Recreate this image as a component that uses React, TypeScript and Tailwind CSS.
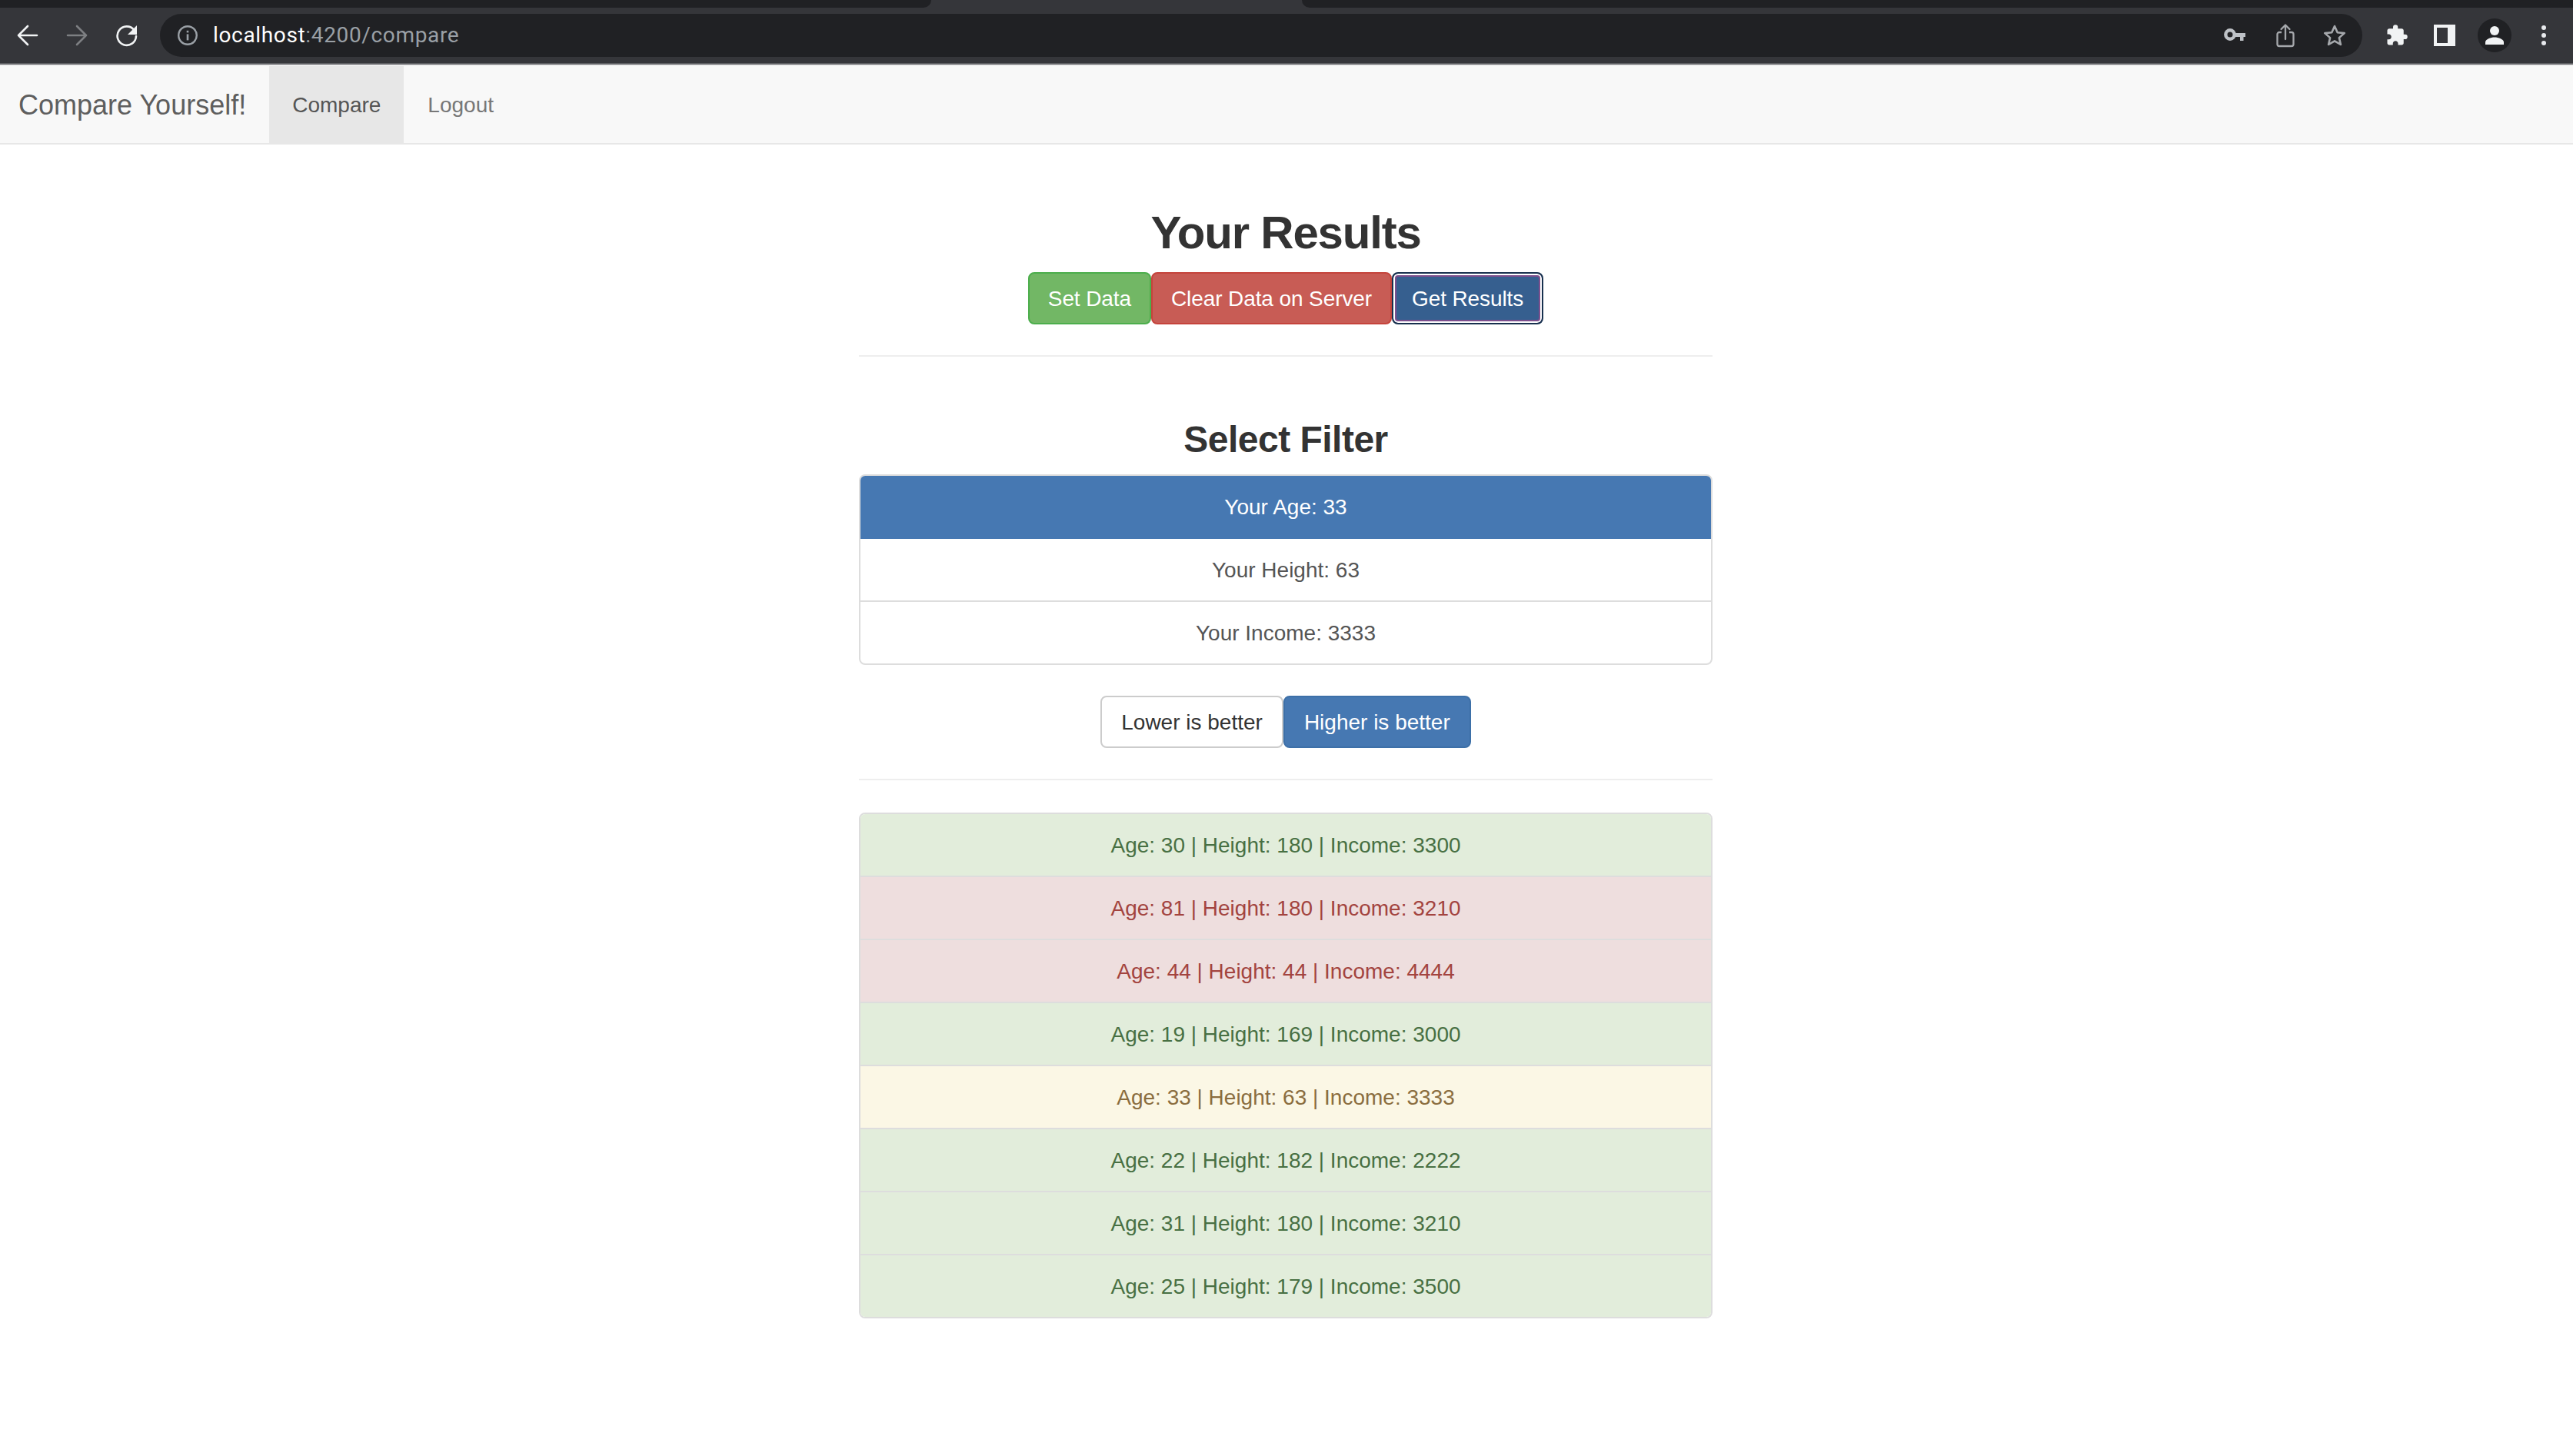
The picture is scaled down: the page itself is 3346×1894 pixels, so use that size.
import React from "react";

const filters = [
  { label: "Your Age: 33", active: true },
  { label: "Your Height: 63", active: false },
  { label: "Your Income: 3333", active: false },
];

const results = [
  { text: "Age: 30 | Height: 180 | Income: 3300", cls: "bg-[#e2eddb] text-[#487043]" },
  { text: "Age: 81 | Height: 180 | Income: 3210", cls: "bg-[#eedede] text-[#a3443f]" },
  { text: "Age: 44 | Height: 44 | Income: 4444", cls: "bg-[#eedede] text-[#a3443f]" },
  { text: "Age: 19 | Height: 169 | Income: 3000", cls: "bg-[#e2eddb] text-[#487043]" },
  { text: "Age: 33 | Height: 63 | Income: 3333", cls: "bg-[#fbf7e5] text-[#8a6d3f]" },
  { text: "Age: 22 | Height: 182 | Income: 2222", cls: "bg-[#e2eddb] text-[#487043]" },
  { text: "Age: 31 | Height: 180 | Income: 3210", cls: "bg-[#e2eddb] text-[#487043]" },
  { text: "Age: 25 | Height: 179 | Income: 3500", cls: "bg-[#e2eddb] text-[#487043]" },
];

function Toolbar() {
  return (
    <div className="bg-[#35363a]">
      <div className="flex h-[10px]">
        <div className="w-[1211px] rounded-br-[10px] bg-[#202124]" />
        <div className="w-[482px]" />
        <div className="flex-1 rounded-bl-[10px] bg-[#202124]" />
      </div>
      <div className="flex h-[72px] items-center">
        <div className="flex w-[208px] shrink-0 items-center">
          <svg className="ml-[22px]" width="28" height="28" viewBox="0 0 28 28" fill="none" stroke="#f1f3f4" strokeWidth="2.6" strokeLinecap="round" strokeLinejoin="round">
            <path d="M26 14H2M14 2 2 14l12 12" />
          </svg>
          <svg className="ml-[36px]" width="28" height="28" viewBox="0 0 28 28" fill="none" stroke="#7d7f82" strokeWidth="2.6" strokeLinecap="round" strokeLinejoin="round">
            <path d="M2 14h24M14 2l12 12-12 12" />
          </svg>
          <svg className="ml-[36px]" width="30" height="30" viewBox="0 0 30 30" fill="none">
            <path d="M24.5 8.2A12.2 12.2 0 1 0 27 16" stroke="#f1f3f4" strokeWidth="2.6" strokeLinecap="round" />
            <path d="M28 2v12H16z" fill="#f1f3f4" />
          </svg>
        </div>
        <div className="flex h-[56px] w-[2864px] shrink-0 items-center rounded-full bg-[#202124] pl-[23px] pr-[21px]">
          <svg width="26" height="26" viewBox="0 0 26 26" fill="none">
            <circle cx="13" cy="13" r="11.8" stroke="#9aa0a6" strokeWidth="2.4" />
            <rect x="11.7" y="11.4" width="2.6" height="8" fill="#9aa0a6" />
            <rect x="11.7" y="6.8" width="2.6" height="2.6" fill="#9aa0a6" />
          </svg>
          <div className="ml-[20px] font-['Roboto',sans-serif] text-[28px] leading-none tracking-[0.65px] text-[#9aa0a6]">
            <span className="text-white">localhost</span>:4200/compare
          </div>
          <div className="ml-auto flex items-center">
            <svg width="28" height="22" viewBox="0 0 28 22" fill="none">
              <circle cx="8" cy="10" r="5.7" stroke="#bdc1c6" strokeWidth="4.4" />
              <path d="M13 8h15v5h-2.500v5h-4.500v-5H13z" fill="#bdc1c6" />
            </svg>
            <svg className="ml-[40px]" width="24" height="32" viewBox="0 0 24 32" fill="none" stroke="#a5a8ac" strokeWidth="2.3" strokeLinejoin="round">
              <path d="M7 12H4a2.500 2.500 0 0 0-2.500 2.500v13A2.500 2.500 0 0 0 4 30h16a2.500 2.500 0 0 0 2.500-2.500v-13A2.500 2.500 0 0 0 20 12h-3" />
              <path d="M12 21V3M6.500 8 12 2.500 17.500 8" strokeLinecap="round" />
            </svg>
            <svg className="ml-[37px]" width="30" height="30" viewBox="0 0 30 30" fill="none" stroke="#a5a8ac" strokeWidth="2.6" strokeLinejoin="round">
              <path d="m15 3 3.700 8.200 9 .9-6.800 6 2 8.800-7.900-4.600-7.900 4.600 2-8.800-6.800-6 9-.9z" />
            </svg>
          </div>
        </div>
        <div className="flex flex-1 items-center">
          <svg className="ml-[30px]" width="30" height="30" viewBox="0 0 24 24" fill="#f1f3f4">
            <path d="M20.500 11H19V7c0-1.100-.9-2-2-2h-4V3.500a2.500 2.500 0 0 0-5 0V5H4c-1.100 0-2 .9-2 2v3.800h1.500c1.500 0 2.700 1.200 2.700 2.700S5 16.200 3.500 16.200H2V20c0 1.100.9 2 2 2h3.800v-1.500c0-1.500 1.200-2.700 2.700-2.700s2.700 1.200 2.700 2.700V22H17c1.100 0 2-.9 2-2v-4h1.500a2.500 2.500 0 0 0 0-5z" />
          </svg>
          <svg className="ml-[33px]" width="28" height="28" viewBox="0 0 28 28" fill="none">
            <path fillRule="evenodd" clipRule="evenodd" d="M0 0h28v28H0zM4 4v20h14V4z" fill="#f1f3f4" />
          </svg>
          <div className="ml-[29px] flex h-[44px] w-[44px] items-center justify-center rounded-full bg-[#202124]">
            <svg width="26" height="26" viewBox="0 0 26 26" fill="#f1f3f4">
              <circle cx="13" cy="7" r="6" />
              <path d="M1 25v-3c0-4 7-6.500 12-6.500S25 18 25 22v3z" />
            </svg>
          </div>
          <div className="ml-[39px] flex flex-col gap-[4px]">
            <div className="h-[6px] w-[6px] rounded-full bg-[#e8eaed]" />
            <div className="h-[6px] w-[6px] rounded-full bg-[#e8eaed]" />
            <div className="h-[6px] w-[6px] rounded-full bg-[#e8eaed]" />
          </div>
        </div>
      </div>
      <div className="h-[2px] bg-[#5f6064]" />
      <div className="h-[2px] bg-[#eeeeee]" />
    </div>
  );
}

function Navbar() {
  return (
    <nav className="flex h-[102px] border-b-2 border-[#e7e7e7] bg-[#f8f8f8]">
      <div className="flex items-center pl-[24px] pr-[30px] pt-[2px] text-[36px] text-[#5e5e5e]">Compare Yourself!</div>
      <div className="flex items-center bg-[#e7e7e7] px-[30px] pt-[2px] text-[#555555]">Compare</div>
      <div className="flex items-center px-[31px] pt-[2px] text-[#777777]">Logout</div>
    </nav>
  );
}

function Hr() {
  return <div className="h-[2px] bg-[#eeeeee]" />;
}

export default function App() {
  return (
    <div className="min-h-[1894px] bg-white font-['Liberation_Sans',Arial,sans-serif] text-[28px] leading-[40px] text-[#333333]">
      <Toolbar />
      <Navbar />
      <main className="ml-[1117px] w-[1110px] pb-[100px]">
        <h1 className="mt-[82px] text-center text-[60px] leading-[66px] font-bold tracking-[-1.2px]">Your Results</h1>
        <div className="mt-[18px] flex justify-center tracking-[-0.1px]">
          <button className="h-[68px] rounded-[8px] border-2 border-[#4cae4c] bg-[#72b765] px-[24px] pt-[1px] text-white">Set Data</button>
          <button className="h-[68px] rounded-[8px] border-2 border-[#c5443c] bg-[#c85c55] px-[24px] pt-[1px] text-white">Clear Data on Server</button>
          <button className="h-[68px] rounded-[8px] border-2 border-[#17304e] bg-[#365f8f] px-[24px] pt-[1px] text-white shadow-[inset_0_0_0_2px_#ffffff,inset_0_0_0_4px_#7d4f8d]">Get Results</button>
        </div>
        <div className="mt-[40px]"><Hr /></div>
        <h2 className="mt-[82px] text-center text-[48px] leading-[52px] font-bold tracking-[-0.5px]">Select Filter</h2>
        <div className="mt-[19px] overflow-hidden rounded-[8px] border-2 border-[#dddddd]">
          {filters.map((f, i) => (
            <div
              key={f.label}
              className={
                f.active
                  ? "-m-[2px] mb-0 h-[84px] bg-[#4678b2] pt-[23px] text-center text-white"
                  : i === 1
                    ? "h-[82px] border-b-2 border-[#dddddd] pt-[21px] text-center text-[#555555]"
                    : "h-[80px] pt-[21px] text-center text-[#555555]"
              }
            >
              {f.label}
            </div>
          ))}
        </div>
        <div className="mt-[40px] flex justify-center">
          <button className="h-[68px] rounded-[8px] border-2 border-[#cccccc] bg-white px-[25px] pt-[1px] text-[#333333]">Lower is better</button>
          <button className="h-[68px] rounded-[8px] border-2 border-[#3d70a8] bg-[#4678b2] px-[25px] pt-[1px] text-white">Higher is better</button>
        </div>
        <div className="mt-[40px]"><Hr /></div>
        <div className="mt-[42px] overflow-hidden rounded-[8px] border-2 border-[#dddddd]">
          {results.map((r, i) => (
            <div
              key={r.text}
              className={`pt-[21px] text-center ${r.cls} ${i < results.length - 1 ? "h-[82px] border-b-2 border-[#dddddd]" : "h-[80px]"}`}
            >
              {r.text}
            </div>
          ))}
        </div>
      </main>
    </div>
  );
}
